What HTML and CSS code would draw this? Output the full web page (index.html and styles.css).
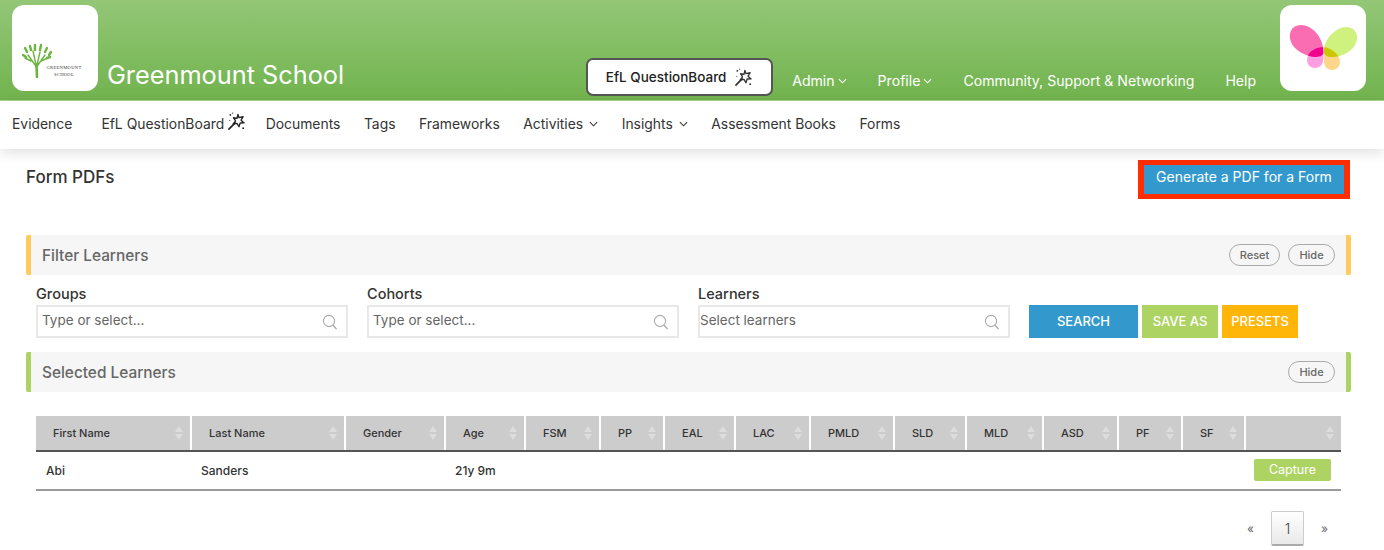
FILE: index.html
```html
<!DOCTYPE html>
<html lang="en">
<head>
<meta charset="utf-8">
<title>Form PDFs</title>
<link rel="stylesheet" href="styles.css">
</head>
<body>
<svg class="defs" width="0" height="0" aria-hidden="true">
  <symbol id="wand" viewBox="0 0 20 20">
    <path d="M1.5 18.5 9 11" fill="none" stroke="currentColor" stroke-width="1.8"/>
    <path d="M11.5 2.5 12.6 6 17 5 14.8 8.6 18 11.5 13.8 11.6 12.6 15.5 10.5 12 6.5 12.6 9 9.4 6.8 6 10.5 6.8Z" fill="none" stroke="currentColor" stroke-width="1.4" stroke-linejoin="round"/>
    <circle cx="3.5" cy="3" r="1" fill="currentColor"/>
    <circle cx="6" cy="1.2" r=".6" fill="currentColor"/>
    <circle cx="17" cy="17" r="1" fill="currentColor"/>
    <circle cx="3" cy="9" r=".6" fill="currentColor"/>
  </symbol>
  <symbol id="search" viewBox="0 0 16 16">
    <circle cx="7" cy="7" r="5.6" fill="none" stroke="currentColor" stroke-width="1.1"/>
    <path d="M11 11.2 14.5 15" fill="none" stroke="currentColor" stroke-width="1.3"/>
  </symbol>
  <symbol id="chev" viewBox="0 0 10 6">
    <path d="M1 1 5 5 9 1" fill="none" stroke="currentColor" stroke-width="1.2"/>
  </symbol>
</svg>

<header class="topbar">
  <div class="tile tile-school">
    <svg class="school-logo" viewBox="0 0 86 86" role="img" aria-label="Greenmount School">
      <g fill="none" stroke="#6cb43f" stroke-linecap="round">
        <path d="M25 72 24.5 60" stroke-width="2.6"/>
        <path d="M24.5 62 16 50M24.5 62 21 46M24.5 62 28 47M24.5 62 33 50M19 56 13 53M29 56 36 53" stroke-width="1.4"/>
        <path d="M15 47l-2-4M19 45l-1-4M23 45v-5M28 45l1-5M33 47l2-4M37 50l2-3M14 52l-3-2M35 53l3-1" stroke-width="2.4"/>
      </g>
      <text class="school-text" x="52" y="63.5" text-anchor="middle">GREENMOUNT</text>
      <text class="school-text" x="52" y="70.5" text-anchor="middle">SCHOOL</text>
    </svg>
  </div>
  <h1 class="school-name">Greenmount School</h1>
  <a class="qb-button">EfL QuestionBoard <svg class="wand"><use href="#wand"/></svg></a>
  <nav class="toplinks">
    <a class="toplink">Admin<svg class="chev"><use href="#chev"/></svg></a>
    <a class="toplink">Profile<svg class="chev"><use href="#chev"/></svg></a>
    <a class="toplink">Community, Support &amp; Networking</a>
    <a class="toplink">Help</a>
  </nav>
  <div class="tile tile-brand">
    <svg class="butterfly" viewBox="0 0 86 86" role="img" aria-label="Logo">
      <defs>
        <clipPath id="wing-l"><path d="M43.5 46C43 32 32 20 21 20 11 20 8 29 11 37 14 45 26 52 36 52 41 52 44 50 43.5 46Z"/></clipPath>
        <clipPath id="wing-r"><path d="M44 46C44 34 56 22 66 22 76 22 79 31 76 38 73 46 62 52 52 52 47 52 44 50 44 46Z"/></clipPath>
      </defs>
      <path d="M43.5 46C43 32 32 20 21 20 11 20 8 29 11 37 14 45 26 52 36 52 41 52 44 50 43.5 46Z" fill="#fb6db2"/>
      <path d="M44 46C44 34 56 22 66 22 76 22 79 31 76 38 73 46 62 52 52 52 47 52 44 50 44 46Z" fill="#cff27f"/>
      <path d="M43.4 42C34 42 27 48 27 55 27 60 31 63 35 63 40 63 43 59 43.4 54Z" fill="#ff9fe2"/>
      <path d="M44 42C52 43 60 50 60 57 60 62 56 65 52 65 47 65 44 61 44 56Z" fill="#fdd68a"/>
      <g clip-path="url(#wing-l)"><path d="M43.4 42C34 42 27 48 27 55 27 60 31 63 35 63 40 63 43 59 43.4 54Z" fill="#f0008c"/></g>
      <g clip-path="url(#wing-r)"><path d="M44 42C52 43 60 50 60 57 60 62 56 65 52 65 47 65 44 61 44 56Z" fill="#c9c800"/></g>
    </svg>
  </div>
</header>

<nav class="mainnav">
  <a class="navlink navlink-first">Evidence</a>
  <a class="navlink">EfL QuestionBoard<svg class="wand wand-nav"><use href="#wand"/></svg></a>
  <a class="navlink">Documents</a>
  <a class="navlink">Tags</a>
  <a class="navlink">Frameworks</a>
  <a class="navlink">Activities<svg class="chev chev-nav"><use href="#chev"/></svg></a>
  <a class="navlink">Insights<svg class="chev chev-nav"><use href="#chev"/></svg></a>
  <a class="navlink">Assessment Books</a>
  <a class="navlink">Forms</a>
</nav>

<main class="page">
  <div class="title-row">
    <h2 class="page-title">Form PDFs</h2>
    <a class="generate">Generate a PDF for a Form</a>
  </div>

  <section class="bar bar-yellow">
    <h3 class="bar-title">Filter Learners</h3>
    <button class="pill pill-wide">Reset</button>
    <button class="pill">Hide</button>
  </section>

  <div class="filters">
    <label class="field">
      <span class="field-label">Groups</span>
      <span class="field-box">Type or select...<svg class="search"><use href="#search"/></svg></span>
    </label>
    <label class="field">
      <span class="field-label">Cohorts</span>
      <span class="field-box">Type or select...<svg class="search"><use href="#search"/></svg></span>
    </label>
    <label class="field">
      <span class="field-label">Learners</span>
      <span class="field-box field-box-tight">Select learners<svg class="search"><use href="#search"/></svg></span>
    </label>
    <div class="actions">
      <button class="action action-blue">SEARCH</button>
      <button class="action action-green">SAVE AS</button>
      <button class="action action-amber">PRESETS</button>
    </div>
  </div>

  <section class="bar bar-green">
    <h3 class="bar-title">Selected Learners</h3>
    <button class="pill">Hide</button>
  </section>

  <table class="learners">
    <colgroup>
      <col class="c1"><col class="c2"><col class="c3"><col class="c4"><col class="c5"><col class="c6"><col class="c7"><col class="c8"><col class="c9"><col class="c10"><col class="c11"><col class="c12"><col class="c13"><col class="c14"><col class="c15">
    </colgroup>
    <thead>
      <tr>
        <th>First Name</th><th>Last Name</th><th>Gender</th><th>Age</th><th>FSM</th><th>PP</th><th>EAL</th><th>LAC</th><th>PMLD</th><th>SLD</th><th>MLD</th><th>ASD</th><th>PF</th><th>SF</th><th></th>
      </tr>
    </thead>
    <tbody>
      <tr>
        <td>Abi</td><td>Sanders</td><td></td><td>21y 9m</td><td></td><td></td><td></td><td></td><td></td><td></td><td></td><td></td><td></td><td></td>
        <td class="cell-capture"><button class="capture">Capture</button></td>
      </tr>
    </tbody>
  </table>

  <div class="pager">
    <span class="pager-arrow">«</span>
    <span class="pager-page">1</span>
    <span class="pager-arrow">»</span>
  </div>
</main>
</body>
</html>
```

FILE: styles.css
```css
* { box-sizing: border-box; }
html, body { margin: 0; padding: 0; height: 550px; overflow: hidden; }
body { background: #fff; color: #333; font-family: Inter, "Open Sans", sans-serif; font-size: 13.5px; }
.defs { position: absolute; }
a { color: inherit; text-decoration: none; }
button { font-family: inherit; cursor: pointer; }
h1, h2, h3 { margin: 0; font-weight: 500; }

.topbar { height: 101px; display: flex; align-items: flex-end; padding: 5px 18px 9px 12px; background: linear-gradient(#93c777, #71b34e); border-bottom: 1px solid #a8d58c; }
.tile { width: 86px; height: 86px; flex: none; background: #fff; border-radius: 12px; }
.tile-brand { margin-left: auto; }
.school-logo, .butterfly { display: block; width: 86px; height: 86px; }
.school-text { font: 4.6px "Liberation Serif", serif; fill: #333; letter-spacing: .3px; }
.school-name { margin: 0 242px 0 9px; color: #fff; font-size: 25.3px; font-weight: 400; line-height: 32px; white-space: nowrap; }
.qb-button { flex: none; width: 187px; height: 38px; margin-bottom: -5px; margin-right: 19px; display: flex; align-items: center; justify-content: center; gap: 8px; background: #fff; border: 2px solid #555; border-radius: 7px; font-size: 13.5px; font-weight: 500; color: #222; }
.wand { width: 19px; height: 19px; color: #333; flex: none; }
.toplinks { display: flex; gap: 31px; margin-bottom: -1px; color: #fff; font-size: 14.1px; line-height: 22px; }
.toplink { display: flex; align-items: center; white-space: nowrap; }
.chev { width: 9px; height: 6px; margin-left: 3px; color: currentColor; }

.mainnav { height: 48px; display: flex; align-items: center; gap: 23.5px; padding: 0 0 3px 12px; background: #fff; box-shadow: 0 4px 12px rgba(0,0,0,.12); color: #333; font-size: 13.9px; position: relative; }
.navlink { display: flex; align-items: center; white-space: nowrap; }
.navlink-first { margin-right: 5.5px; }
.wand-nav { margin: -4px -4px 0 3px; color: #222; }
.chev-nav { margin-left: 6px; }

.page { padding: 11px 33px 0 26px; }
.title-row { height: 39px; display: flex; justify-content: space-between; align-items: center; margin-bottom: 36px; }
.page-title { font-size: 17px; color: #333; padding-bottom: 5px; }
.generate { width: 212px; height: 39px; margin-right: 1px; padding-bottom: 7px; display: flex; align-items: center; justify-content: center; background: #3399cc; border-style: solid; border-color: #ff2d00; border-width: 5px 6px; color: #fff; font-size: 14px; }

.bar { height: 40px; display: flex; align-items: center; gap: 8px; padding: 0 11px; background: #f6f6f6; border-left: 5px solid; border-right: 5px solid; border-radius: 2px; }
.bar-yellow { border-color: #ffcb5c; }
.bar-green { border-color: #add463; }
.bar-title { flex: 1; font-size: 15.4px; color: #666; }
.pill { height: 22px; width: 47px; padding: 0; border: 1.5px solid #aaa; border-radius: 11px; background: transparent; color: #666; font-size: 11px; font-weight: 500; }
.pill-wide { width: 51px; }

.filters { display: flex; align-items: flex-end; height: 63px; padding-left: 10px; margin-bottom: 14px; }
.field { width: 312px; margin-right: 19px; display: block; }
.field-label { display: block; height: 18px; line-height: 18px; font-size: 14.5px; font-weight: 500; color: #333; margin-bottom: 2px; }
.field-box { height: 33px; display: flex; align-items: center; justify-content: space-between; padding: 0 8px 3px 4px; background: #fff; border: 2px solid #e8e8e8; color: #666; font-size: 13.5px; }
.field-box-tight { padding-left: 0; }
.search { width: 16px; height: 16px; color: #aaa; margin-top: 4px; }
.actions { display: flex; gap: 4px; }
.action { height: 33px; padding: 0 0 1px; border: 0; color: #fff; font-size: 13px; font-weight: 500; }
.action-blue { width: 109px; background: #3399cc; }
.action-green { width: 76px; background: #add463; }
.action-amber { width: 76px; background: #ffb609; }

.learners { width: 1305px; margin: 24px 0 0 10px; table-layout: fixed; border-collapse: collapse; font-size: 12px; }
.c1 { width: 155px; } .c2 { width: 154px; } .c3 { width: 100px; } .c4 { width: 80px; } .c5 { width: 75px; }
.c6 { width: 64px; } .c7 { width: 71px; } .c8 { width: 75px; } .c9 { width: 84px; } .c10 { width: 72px; }
.c11 { width: 77px; } .c12 { width: 75px; } .c13 { width: 64px; } .c14 { width: 63px; } .c15 { width: 96px; }
.learners th { position: relative; height: 35px; padding: 0 0 0 17px; background: #ccc; border-right: 2px solid #fff; border-bottom: 2px solid #555; text-align: left; font-weight: 500; color: #333; font-size: 11px; }
.learners th:last-child { border-right: 0; }
.learners th::before, .learners th::after { content: ""; position: absolute; right: 7px; border-left: 4px solid transparent; border-right: 4px solid transparent; }
.learners th::before { top: 10px; border-bottom: 6px solid #ddd; }
.learners th::after { top: 18px; border-top: 6px solid #ddd; }
.learners td { height: 39px; padding: 0 0 0 10px; border-bottom: 2px solid #999; color: #333; font-size: 12px; font-weight: 500; }
.learners td.cell-capture { padding: 0 10px 2px 0; text-align: right; }
.capture { width: 77px; height: 22px; padding: 0; border: 0; border-radius: 2px; background: #add463; color: #fff; font-size: 12.5px; vertical-align: middle; }

.pager { display: flex; justify-content: flex-end; align-items: center; height: 35px; margin-top: 20px; padding-right: 23px; gap: 17px; color: #666; }
.pager-arrow { font-size: 12px; }
.pager-page { width: 33px; height: 35px; display: flex; align-items: center; justify-content: center; border: 1px solid #ccc; border-bottom: 2px solid #aaa; border-radius: 2px; background: linear-gradient(#fff, #e9e9e9); color: #444; font-size: 14px; font-weight: 300; }
```
